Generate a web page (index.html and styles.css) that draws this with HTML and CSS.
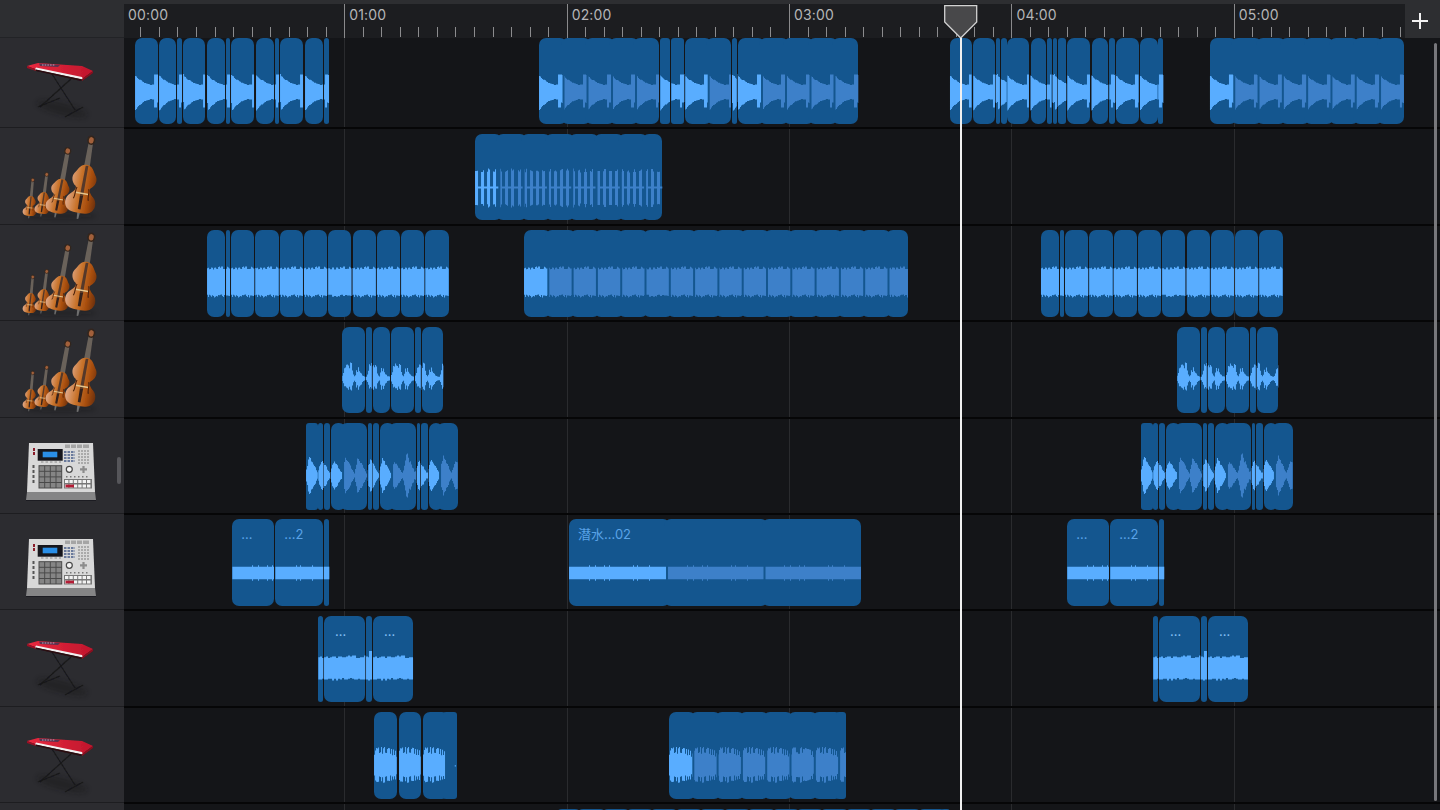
FILE: index.html
```html
<!DOCTYPE html>
<html lang="zh">
<head>
<meta charset="utf-8">
<title>Tracks</title>
<link rel="stylesheet" href="styles.css">
</head>
<body>
<svg class="defs" width="0" height="0" aria-hidden="true">
  <defs>
    <linearGradient id="woodGrad" x1="0" x2="1" y1="0" y2="0">
      <stop offset="0" stop-color="#e0a98a"/>
      <stop offset=".38" stop-color="#c9742c"/>
      <stop offset=".72" stop-color="#a84e0e"/>
      <stop offset="1" stop-color="#6d300c"/>
    </linearGradient>
    <linearGradient id="redGrad" x1="0" x2="1" y1="0" y2="0">
      <stop offset="0" stop-color="#ea2a40"/>
      <stop offset="1" stop-color="#c0162c"/>
    </linearGradient>
    <filter id="soft" x="-30%" y="-60%" width="160%" height="220%"><feGaussianBlur stdDeviation="2.5"/></filter>
    <filter id="tiny" x="-5%" y="-5%" width="110%" height="110%"><feGaussianBlur stdDeviation=".3"/></filter>

    <g id="wood">
      <path d="M-2.500 48H2.500L1.500 62H-1.500Z" fill="#6e6e6e"/>
      <path d="M0 -50C12 -50 14 -38 20 -30C25 -22 22 -10 14 -4C11 0 14 6 22 14C30 22 31 38 20 46C12 51 -12 51 -20 46C-31 38 -30 22 -22 14C-14 6 -11 0 -14 -4C-22 -10 -25 -22 -20 -30C-14 -38 -12 -50 0 -50Z" fill="url(#woodGrad)"/>
      <path d="M-2 -48H3L3 14H-3Z" fill="#55392a"/>
      <path d="M-3 14H3L2.500 42H-2.500Z" fill="#34201a"/>
      <path d="M-12 9H12" stroke="#e4c48c" stroke-width="3"/>
      <path d="M-11 -2C-14 6 -11 14 -14 22M11 -2C14 6 11 14 14 22" fill="none" stroke="#4a200a" stroke-width="2"/>
    </g>
    <g id="neck-long">
      <path d="M-5 -40L-5 -128H5L7 -40Z" fill="#6a625a"/>
      <ellipse cx="0" cy="-131" rx="7" ry="9" fill="#a2613a" stroke="#33251c" stroke-width="3"/>
    </g>
    <g id="neck-short">
      <path d="M-5 -40L-4 -98H4L6 -40Z" fill="#6a625a"/>
      <ellipse cx="0" cy="-101" rx="6" ry="8" fill="#a2613a" stroke="#33251c" stroke-width="3"/>
    </g>

    <symbol id="keyboard" viewBox="0 0 124 96">
      <ellipse cx="62" cy="77" rx="26" ry="6" transform="rotate(14 62 77)" fill="#141416" opacity=".4" filter="url(#soft)"/>
      <g filter="url(#tiny)">
        <path d="M52 42L75 78" stroke="#17171a" stroke-width="1.100"/>
        <path d="M72 46L40 75" stroke="#17171a" stroke-width="1.100"/>
        <path d="M38 75L60 66M65 85L83 75" stroke="#17171a" stroke-width="1.200"/>
        <path d="M27 34L38 31L82 34L93 39L82 47L35 37Z" fill="url(#redGrad)"/>
        <path d="M36 35.500L82 45L83 47.500L35 37.500Z" fill="#f0f0f0"/>
        <path d="M36 37.500L82 47.500L81 49L36 39Z" fill="#2a0a10"/>
        <path d="M27 34L35 37L36 39L27 36Z" fill="#9e1023"/>
        <path d="M82 47L93 39V41L82 49Z" fill="#8c0e1f"/>
        <path d="M39 31.500L60 33L58 35L40 34Z" fill="#5a3350"/>
        <path d="M42 33H55" stroke="#cfc4d4" stroke-width=".8" stroke-dasharray="1.500 1.200"/>
      </g>
    </symbol>

    <symbol id="strings" viewBox="0 0 124 96">
      <ellipse cx="60" cy="88" rx="36" ry="3" fill="#111" opacity=".3" filter="url(#soft)"/>
      <g filter="url(#tiny)">
        <g transform="translate(30 78) rotate(6) scale(.24 .2)"><use href="#neck-long"/><use href="#wood"/></g>
        <g transform="translate(42.700 75) rotate(8) scale(.26 .22)"><use href="#neck-long"/><use href="#wood"/></g>
        <g transform="translate(59 68) rotate(11) scale(.41 .35)"><use href="#neck-long"/><use href="#wood"/></g>
        <g transform="translate(82.700 61) rotate(10) scale(.54 .49)"><use href="#neck-short"/><use href="#wood"/></g>
      </g>
    </symbol>

    <symbol id="drum" viewBox="0 0 124 96">
      <g filter="url(#tiny)">
        <path d="M27 74H95L96 82H26Z" fill="#858586"/>
        <path d="M26 82H96V83H26Z" fill="#1f1f21"/>
        <path d="M29 25H93L95 74H27Z" fill="#d8d8d8"/>
        <path d="M65 26.500h5v3.500h-5zM71 26.500h5v3.500h-5zM77 26.500h5v3.500h-5zM83 26.500h6v3.500h-6z" fill="#a5a5a5"/>
        <rect x="37.700" y="31" width="25" height="11.700" fill="#17171a"/>
        <rect x="42.700" y="33.700" width="14.600" height="5.600" fill="#2a8fe8"/>
        <path d="M64 34h11M64 37h11M64 40h11M64 43h11" stroke="#6b7a9c" stroke-width="2" stroke-dasharray="2.500 1"/>
        <path d="M78 33h11M78 36h11M78 39h11M78 42h11M78 45h11" stroke="#9a9a9a" stroke-width="1.500" stroke-dasharray="2 1"/>
        <path d="M41 44h20" stroke="#8a8a8a" stroke-width="1.200" stroke-dasharray="2.500 2"/>
        <rect x="39" y="47.700" width="22.700" height="22.300" fill="#858585" stroke="#4a4a4a" stroke-width="1"/>
        <path d="M44.700 48v22M50.300 48v22M56 48v22M39 53.300h22.700M39 58.900h22.700M39 64.500h22.700" stroke="#4a4a4a" stroke-width="1"/>
        <circle cx="69.300" cy="51.300" r="3" fill="#f4f4f4" stroke="#4a4a4a" stroke-width="1.200"/>
        <path d="M80 51.300h7M83.500 48v7" stroke="#8c8c8c" stroke-width="2.200"/>
        <path d="M66 58.800h24" stroke="#777" stroke-width="1.400" stroke-dasharray="1.500 2.500"/>
        <rect x="64" y="61" width="28" height="9.500" fill="#777"/>
        <path d="M65 63.500h26M65 68h26" stroke="#f2f2f2" stroke-width="2.800" stroke-dasharray="3.400 1"/>
        <path d="M65.500 68h8.500" stroke="#b31d34" stroke-width="2.800"/>
        <path d="M34 30v3M34 34v3" stroke="#8b1d2c" stroke-width="2"/>
        <path d="M33.500 47v20" stroke="#555" stroke-width="2" stroke-dasharray="3 2"/>
      </g>
    </symbol>
  </defs>
</svg>

<main class="app">
  <header class="topbar">
    <div class="corner"></div>
    <div class="ruler" id="ruler">
      <div class="minute minute-first"><span class="time">00:00</span></div>
      <div class="minute"><span class="time">01:00</span></div>
      <div class="minute"><span class="time">02:00</span></div>
      <div class="minute"><span class="time">03:00</span></div>
      <div class="minute"><span class="time">04:00</span></div>
      <div class="minute"><span class="time">05:00</span></div>
    </div>
    <div class="add">
      <svg class="add-icon" width="16" height="16" viewBox="0 0 16 16"><path d="M8 0V16M0 8H16" stroke="#f2f2f2" stroke-width="2"/></svg>
    </div>
  </header>

  <section class="rows" id="rows">
    <div class="row"><div class="inst"><svg class="icon"><use href="#keyboard"/></svg></div><div class="track"></div></div>
    <div class="row"><div class="inst"><svg class="icon"><use href="#strings"/></svg></div><div class="track"></div></div>
    <div class="row"><div class="inst"><svg class="icon"><use href="#strings"/></svg></div><div class="track"></div></div>
    <div class="row"><div class="inst"><svg class="icon"><use href="#strings"/></svg></div><div class="track"></div></div>
    <div class="row"><div class="inst"><svg class="icon"><use href="#drum"/></svg><span class="grip"></span></div><div class="track"></div></div>
    <div class="row"><div class="inst"><svg class="icon"><use href="#drum"/></svg></div><div class="track"></div></div>
    <div class="row"><div class="inst"><svg class="icon"><use href="#keyboard"/></svg></div><div class="track"></div></div>
    <div class="row"><div class="inst"><svg class="icon"><use href="#keyboard"/></svg></div><div class="track"></div></div>
    <div class="row"><div class="inst"></div><div class="track"></div></div>
  </section>

  <div class="playhead">
    <svg class="playhead-cap" width="34" height="34" viewBox="0 0 34 34"><path d="M.7.7H32.700V17L16.700 33L.7 17Z" fill="#48484a" stroke="#d2d2d2" stroke-width="1.300"/></svg>
    <div class="playhead-line"></div>
  </div>
  <div class="scrollbar"></div>
</main>
<script src="script.js"></script>
</body>
</html>
```

FILE: styles.css
```css
* { box-sizing: border-box; }

html, body {
  margin: 0;
  width: 1440px;
  height: 810px;
  overflow: hidden;
  background: #141518;
  font-family: Inter, "Noto Sans CJK SC", sans-serif;
}

.defs { position: absolute; }

.app {
  position: relative;
  width: 1440px;
  height: 810px;
  overflow: hidden;
  display: flex;
  flex-direction: column;
}

.topbar {
  position: relative;
  z-index: 2;
  flex: none;
  height: 38px;
  display: flex;
  background: #2d2e31;
}

.corner {
  flex: none;
  width: 124px;
  border-bottom: 1px solid #222326;
}

.ruler {
  position: relative;
  flex: none;
  width: 1281px;
  margin-top: 4px;
  display: flex;
  overflow: hidden;
  background: #1c1d20;
}

.minute {
  flex: none;
  width: 222.4px;
  height: 100%;
  padding: 1.500px 0 0 4px;
  border-left: 1px solid #8a8a8c;
}

.minute-first {
  width: 220.3px;
  padding-left: 4px;
  border-left: 0;
}

.time {
  display: block;
  font-size: 14px;
  line-height: 17px;
  letter-spacing: .15px;
  color: #b5b5b7;
}

.ticks {
  position: absolute;
  left: 0;
  top: 0;
}

.add {
  flex: 1;
  display: flex;
  align-items: center;
  justify-content: center;
  padding: 4px 5px 0 0;
}

.rows {
  flex: none;
  margin-top: -6px;
}

.row {
  position: relative;
  display: flex;
  height: 96.4px;
}

.inst {
  position: relative;
  flex: none;
  width: 124px;
  background: #2c2c30;
  border-bottom: 1px solid #1d1d20;
}

.icon {
  display: block;
  width: 124px;
  height: 96px;
}

.grip {
  position: absolute;
  left: 117px;
  top: 39px;
  width: 4px;
  height: 27px;
  border-radius: 2px;
  background: #56565a;
}

.track {
  position: relative;
  flex: 1;
  border-top: 1px solid #060607;
  border-bottom: 1px solid #060607;
  background-image: linear-gradient(90deg,
    transparent 220px, #2a2b2e 220px, #2a2b2e 221px,
    transparent 221px, transparent 443px, #2a2b2e 443px, #2a2b2e 444px,
    transparent 444px, transparent 665px, #2a2b2e 665px, #2a2b2e 666px,
    transparent 666px, transparent 887px, #2a2b2e 887px, #2a2b2e 888px,
    transparent 888px, transparent 1110px, #2a2b2e 1110px, #2a2b2e 1111px,
    transparent 1111px);
}

.clip {
  position: absolute;
  top: 4.5px;
  height: 86.5px;
  border-radius: 7px;
  background: #14568f;
  overflow: hidden;
}

.clip-thin { border-radius: 3px; }

.clip-label {
  display: block;
  margin: 7px 0 0 9px;
  font-size: 13px;
  line-height: 17px;
  color: #5aa3e8;
  white-space: nowrap;
}

.clip-label-dots {
  margin-left: 11px;
  color: #86c0f5;
}

.waves {
  position: absolute;
  left: 0;
  top: -1px;
  pointer-events: none;
}

.wave-on { fill: #59adff; }
.wave-dim { fill: #3d80c9; }

.playhead {
  position: absolute;
  z-index: 3;
  left: 944px;
  top: 5px;
  width: 34px;
  height: 805px;
  display: flex;
  flex-direction: column;
  align-items: center;
}

.playhead-cap { flex: none; }

.playhead-line {
  flex: 1;
  width: 2px;
  margin-top: -1px;
  background: #f0f0f0;
}

.scrollbar {
  position: absolute;
  z-index: 3;
  right: 3px;
  top: 43px;
  width: 3px;
  height: 758px;
  border-radius: 2px;
  background: #77777b;
}
```

FILE: script.js
```js
(function () {
  var X0 = 124, ROW_H = 96.4, CLIP_TOP = 5.5, NS = 'http://www.w3.org/2000/svg';

  function rnd(x) { var s = Math.sin(x * 12.9898 + 4.1) * 43758.5453; return s - Math.floor(s); }
  function lerp(a, p) {
    var f = Math.max(0, Math.min(.9999, p)) * (a.length - 1), i = Math.floor(f);
    return a[i] + (a[i + 1] - a[i]) * (f - i);
  }

  /* waveform shapes: return [up, down] half heights for a phase in one loop; cy is measured from the clip's top */
  var shapes = {
    keys: { period: 24.3, cy: 54.5, f: function (p, n) {
      var j = Math.round(rnd(n * 3.1) * 2) * .5;
      if (p > .8) return [18 - j, p > .9 ? 10 + j : 15 + j];
      return [lerp([16, 12, 10, 8, 7, 7], p / .8) + j, lerp([18, 13, 10, 8, 7, 7], p / .8) + j];
    } },
    comb: { period: 24.3, cy: 54, f: function (p, n, k) {
      var q = p * 4 % 1;
      if (q >= .5) return [1, 1];
      var h = 15 + rnd(n * 1.7 + k) * 4;
      return [h, h + 1];
    } },
    flat: { period: 24.3, cy: 51.5, f: function (p, n) {
      return [12.500 + rnd(n * 2.3) * 3, 12.500 + rnd(n * 3.7 + 50) * 3];
    } },
    burst: { period: 24.3, cy: 52, f: function (p, n) {
      var up = lerp([2, 6, 15, 21, 15, 20, 12, 3, 2, 10, 14, 10, 4, 1.500, 1, 1], p);
      var dn = lerp([2, 5, 10, 13, 14, 13, 10, 3, 2, 11, 14, 12, 5, 1.500, 1, 1], p);
      var j = rnd(n * 2.9) * .6 + .45;
      return [up * j + 1, dn * j + 1];
    } },
    tri: { period: 12.15, cy: 52, f: function (p, n, k) {
      var a = (.65 + rnd(k * 2.3 + 3) * .35) * 23;
      var e = p < .3 ? .2 + .8 * p / .3 : (1 - p) / .7 * .9 + .1;
      var j = .8 + rnd(n * 2.1 + k * 7) * .25;
      return [a * e * j, a * e * j];
    } },
    band: { period: 97, cy: 53.5, f: function (p, n) {
      var s = rnd(n * 3.1 + 1) > .9 ? 1.500 : 0;
      return [6.300 + s, 6.300 + s];
    } },
    pad: { period: 48.6, cy: 52.5, f: function (p, n) {
      var m = Math.floor(n / 2);
      return [p > .92 ? 17 : 10 + Math.round(rnd(m * 2.3) * 3) * .8, 10 + Math.round(rnd(m * 3.1 + 9) * 3) * .8];
    } },
    noisy: { period: 24.3, cy: 52.7, f: function (p, n) {
      var e = lerp([.8, 1, 1, 1, .95, .9, .85, .6], p);
      var s = rnd(n * 2.7) > .55 ? 5.500 : 0;
      return [(11 + s + rnd(n * 1.3 + 3) * 2) * e, (11 + s * .9 + rnd(n * 1.9 + 8) * 2) * e];
    } }
  };

  function seams(start, end, period) {
    var c = [], a = start, i = 0;
    while (a < end - 1) {
      var b = Math.min(end, a + period);
      c.push([a, b, i === 0 ? 0 : 1]);
      a = b; i++;
    }
    return c;
  }
  function spaced(start, n, period, gap) {
    var c = [];
    for (var i = 0; i < n; i++) c.push([start + i * period, start + (i + 1) * period - gap, 0]);
    return c;
  }
  function shift(cells, d) {
    return cells.map(function (c) { var r = c.slice(); r[0] += d; r[1] += d; return r; });
  }

  var strA = [[207, 225, 0], [226, 230, 0]].concat(spaced(231, 9, 24.3, 1));
  var strB = [[342.3, 365, 0], [365.7, 371.7, 0], [372.7, 390, 0], [391, 414, 0], [415, 420.7, 0], [421.7, 443.300, 0]];
  var mpc = [[306, 317.7, 0], [318.3, 323.3, 0], [323.7, 330, 0], [330.7, 343, 0], [343, 367.3, 1], [368.3, 372.3, 0], [372.7, 379, 0], [379.7, 392, 0], [392, 416, 1], [416.7, 420, 0], [420.7, 428, 0], [428.7, 440, 0], [440, 457.7, 1]];
  var bandA = [[232.3, 274, 0, 0, '...'], [275.3, 323, 0, 0, '...2'], [323.7, 329.3, 0]];
  var padA = [[318.3, 323.3, 0], [324, 365.300, 0, 1, '...'], [366, 372, 0], [373, 413, 0, 1, '...']];

  var rows = [
    { shape: 'keys', groups: [
      [[135, 158, 0], [159, 176, 0], [177, 182, 0], [183, 205, 0], [207, 225, 0], [226, 230, 0], [231, 254, 0], [256, 274, 0], [275, 279, 0], [280, 303, 0], [305, 323, 0], [324, 329, 0]],
      [[539, 563.5, 0], [563.5, 587.5, 1], [587.5, 612, 1], [612, 636, 1], [636, 659, 1], [660.3, 670, 0], [671.3, 684.3, 0], [685.3, 708.7, 0], [708.7, 731, 1], [732, 736.7, 0], [737.7, 762, 0, 1], [762, 786, 1], [786, 810.5, 1], [810.5, 834.5, 1], [834.5, 858.3, 1]],
      [[950, 971.6, 0], [973.3, 995.4, 0, 1], [996, 999.900, 0], [1000.9, 1006.7, 0], [1007.4, 1029, 0, 1], [1030.5, 1046.3, 0, 1], [1047, 1051.5, 0], [1052.5, 1057.4, 0], [1058, 1066.3, 0], [1067.4, 1090, 0, 1], [1091.5, 1108.3, 0, 1], [1109.4, 1115.200, 0], [1115.9, 1138.6, 0, 1], [1140, 1157.6, 0, 1], [1158.3, 1163.4, 0]],
      seams(1210, 1404, 24.3)
    ] },
    { shape: 'comb', groups: [seams(475, 662.3, 24.3)] },
    { shape: 'flat', groups: [strA, seams(524, 908, 24.3), shift(strA, 834)] },
    { shape: 'burst', groups: [strB, shift(strB, 835)] },
    { shape: 'tri', groups: [mpc, shift(mpc, 835)] },
    { shape: 'band', groups: [bandA, [[569, 667, 0, 0, '\u6f5c\u6c34...02'], [667, 764.5, 1, 1], [764.5, 861, 1, 1]], shift(bandA, 835)] },
    { shape: 'pad', groups: [padA, shift(padA, 835)] },
    { shape: 'noisy', groups: [[[374, 396.7, 0], [399, 420.7, 0], [423, 446, 0], [446, 456.7, 2]], seams(669, 846, 24.3)] },
    { shape: null, groups: [seams(555, 950, 24.3)] }
  ];

  function wavePath(shape, a, b, origin) {
    var top = [], bot = [], cy = shape.cy + CLIP_TOP;
    for (var col = Math.floor(a); col < b; col++) {
      var l = Math.max(a, col), r = Math.min(b, col + 1);
      var off = col + .5 - origin, k = Math.floor(off / shape.period);
      var p = off / shape.period - k;
      if (p < 0) p = 0;
      var n = Math.floor(p * shape.period);
      var v = shape.f(p, n, k);
      var yt = (cy - v[0]).toFixed(1), yb = (cy + v[1]).toFixed(1);
      top.push(l.toFixed(1) + ' ' + yt, r.toFixed(1) + ' ' + yt);
      bot.unshift(r.toFixed(1) + ' ' + yb, l.toFixed(1) + ' ' + yb);
    }
    return 'M' + top.join('L') + 'L' + bot.join('L') + 'Z';
  }

  var tracks = document.querySelectorAll('.track');
  rows.forEach(function (row, i) {
    var track = tracks[i];
    var svg = document.createElementNS(NS, 'svg');
    svg.setAttribute('class', 'waves');
    svg.setAttribute('width', 1316);
    svg.setAttribute('height', ROW_H);
    svg.setAttribute('viewBox', X0 + ' 0 1316 ' + ROW_H);
    var shape = row.shape && shapes[row.shape];

    row.groups.forEach(function (cells) {
      var origin = cells[0][0];
      cells.forEach(function (c, ci) {
        var a = c[0], b = c[1];
        var prev = cells[ci - 1], next = cells[ci + 1];
        var seamL = prev && a - prev[1] < .3, seamR = next && next[0] - b < .3;
        var left = a - (seamL ? 3 : 0), right = b + (seamR ? 3 : 0);
        var el = document.createElement('div');
        el.className = 'clip' + (right - left < 14 ? ' clip-thin' : '');
        el.style.left = (left - X0) + 'px';
        el.style.width = (right - left) + 'px';
        if (c[4]) {
          var label = document.createElement('span');
          label.className = 'clip-label' + (row.shape === 'pad' ? ' clip-label-dots' : '');
          label.textContent = c[4];
          el.appendChild(label);
        }
        track.appendChild(el);

        if (c[3]) origin = a;
        if (shape) {
          var path = document.createElementNS(NS, 'path');
          if (c[2] === 2) {
            path.setAttribute('d', 'M' + (b - 2) + ' ' + (shape.cy + CLIP_TOP) + 'h1.200v1.200h-1.200z');
            path.setAttribute('class', 'wave-on');
          } else {
            path.setAttribute('d', wavePath(shape, a + (seamL && c[2] ? 1 : 0), b - (seamR && next[2] ? 1 : 0), origin));
            path.setAttribute('class', c[2] ? 'wave-dim' : 'wave-on');
          }
          svg.appendChild(path);
        }
      });
    });
    track.appendChild(svg);
  });

  /* ruler ticks */
  var ruler = document.getElementById('ruler');
  var t = document.createElementNS(NS, 'svg');
  t.setAttribute('class', 'ticks');
  t.setAttribute('width', 1281);
  t.setAttribute('height', 34);
  var d = '';
  for (var k = 1; k < 70; k++) {
    if (k % 12 === 0) continue;
    var x = Math.round(-2.1 + 18.53 * k) + .5;
    d += 'M' + x + ' 23V33';
  }
  var ticks = document.createElementNS(NS, 'path');
  ticks.setAttribute('d', d);
  ticks.setAttribute('stroke', '#8c8c8e');
  ticks.setAttribute('stroke-width', '1');
  t.appendChild(ticks);
  ruler.appendChild(t);
})();
```
